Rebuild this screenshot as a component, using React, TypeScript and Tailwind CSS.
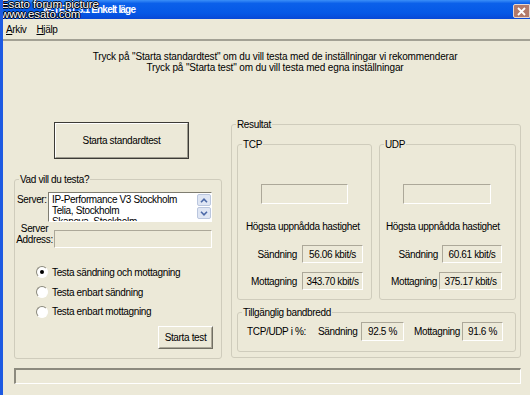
import React from "react";

const sunken =
  "border-t border-l border-t-[#aca899] border-l-[#aca899] border-b border-r border-b-white border-r-white";

function Group({
  label,
  className,
  children,
}: {
  label: string;
  className?: string;
  children?: React.ReactNode;
}) {
  return (
    <div className={"relative border border-[#cfccbc] rounded-[3px] flex flex-col " + (className ?? "")}>
      <span className="absolute -top-[6px] left-[4px] px-[1px] bg-[#ece9d8] leading-[11px] whitespace-nowrap">
        {label}
      </span>
      {children}
    </div>
  );
}

function Radio({ checked, label }: { checked?: boolean; label: string }) {
  return (
    <div className="flex items-center h-[20px] pl-[21px]">
      <div className="w-[12px] h-[12px] rounded-full bg-white border border-t-[#8a887c] border-l-[#8a887c] border-b-white border-r-white flex items-center justify-center">
        {checked && <div className="w-[4px] h-[4px] rounded-full bg-black" />}
      </div>
      <span className="ml-[4px] whitespace-nowrap">{label}</span>
    </div>
  );
}

function ValueBox({ value, className }: { value?: string; className?: string }) {
  return (
    <div className={sunken + " flex items-center justify-center whitespace-nowrap " + (className ?? "")}>
      {value}
    </div>
  );
}

export default function App() {
  return (
    <div className="w-[530px] h-[395px] overflow-hidden relative bg-[#ece9d8] border-l-[3px] border-[#1d5ae2] flex flex-col font-['Liberation_Sans',Arial,sans-serif] text-[10px] leading-[11px] tracking-[-0.35px] text-black">
      {/* Title bar */}
      <div className="h-[19px] shrink-0 bg-[linear-gradient(to_bottom,#3b8ff8_0%,#0b60ea_18%,#0558e6_70%,#0848d6_100%)] flex">
        <span className="pl-[40px] pt-[4px] text-white font-bold text-[10px] leading-[11px] tracking-[-0.8px] whitespace-nowrap">
          IP-TEST 3.1 Enkelt läge
        </span>
        <div className="ml-auto mt-[4px] w-[17px] h-[14px] bg-[#b27a6a] border border-[#e8d8d0] rounded-l-[2px] flex items-center justify-center">
          <svg width="9" height="9" viewBox="0 0 9 9">
            <path d="M1 1 L8 8 M8 1 L1 8" stroke="#ffffff" strokeWidth="1.8" fill="none" />
          </svg>
        </div>
      </div>

      {/* Watermark */}
      <div className="absolute left-[-2px] top-0 text-white text-[11.5px] leading-[9.5px] tracking-[-0.1px] [text-shadow:1px_0_0_#000,-1px_0_0_#000,0_1px_0_#000,0_-1px_0_#000]">
        <div>Esato forum picture</div>
        <div>www.esato.com</div>
      </div>

      {/* Menu */}
      <div className="h-[20px] shrink-0 flex items-center pl-[3px] gap-[10px]">
        <span>
          <span className="underline">A</span>rkiv
        </span>
        <span>
          <span className="underline">H</span>jälp
        </span>
      </div>
      <div className="h-[2px] shrink-0 bg-[#a3a194]" />

      {/* Instructions */}
      <div className="mt-[10px] pl-[17px] text-center tracking-[-0.15px]">
        <div>Tryck på "Starta standardtest" om du vill testa med de inställningar vi rekommenderar</div>
        <div>Tryck på "Starta test" om du vill testa med egna inställningar</div>
      </div>

      {/* Main row */}
      <div className="mt-[45px] flex items-start">
        {/* Left column */}
        <div className="ml-[11px] w-[208px] shrink-0 flex flex-col">
          <button className="ml-[40px] mt-[4px] w-[135px] h-[37px] border border-[#3c3b36] p-0 bg-[#ece9d8]">
            <div className="w-full h-full border border-t-white border-l-white border-b-[#9d9b8e] border-r-[#9d9b8e] flex items-center justify-center">
              Starta standardtest
            </div>
          </button>

          <Group label="Vad vill du testa?" className="mt-[20px] h-[180px] w-[208px]">
            <div className="mt-[12px] flex">
              <span className="ml-[2px] w-[31px] pt-[2px]">Server:</span>
              <div className="w-[164px] h-[30px] bg-white border border-t-[#7f7d71] border-l-[#7f7d71] border-b-white border-r-white overflow-hidden flex">
                <div className="flex-1 pl-[3px] pt-[1px] whitespace-nowrap overflow-hidden">
                  <div>IP-Performance V3 Stockholm</div>
                  <div>Telia, Stockholm</div>
                  <div>Skanova, Stockholm</div>
                </div>
                <div className="w-[14px] flex flex-col gap-[1px] pt-[1px]">
                  <div className="h-[12px] bg-[#dfe6f4] border border-[#bac6de] rounded-[2px] flex items-center justify-center">
                    <svg width="8" height="5" viewBox="0 0 8 5">
                      <path d="M1 4.2 L4 1.2 L7 4.2" stroke="#4d6aa8" strokeWidth="1.6" fill="none" />
                    </svg>
                  </div>
                  <div className="h-[12px] bg-[#dfe6f4] border border-[#bac6de] rounded-[2px] flex items-center justify-center">
                    <svg width="8" height="5" viewBox="0 0 8 5">
                      <path d="M1 0.8 L4 3.8 L7 0.8" stroke="#4d6aa8" strokeWidth="1.6" fill="none" />
                    </svg>
                  </div>
                </div>
              </div>
            </div>

            <div className="mt-[1px] flex items-start">
              <div className="w-[39px] text-center">
                <div>Server</div>
                <div>Address:</div>
              </div>
              <div className={sunken + " mt-[7px] w-[158px] h-[18px]"} />
            </div>

            <div className="mt-[14px] flex flex-col">
              <Radio checked label="Testa sändning och mottagning" />
              <Radio label="Testa enbart sändning" />
              <div className="h-[19px] flex items-center pl-[21px]">
                <div className="w-[12px] h-[12px] rounded-full bg-white border border-t-[#8a887c] border-l-[#8a887c] border-b-white border-r-white" />
                <span className="ml-[4px] whitespace-nowrap">Testa enbart mottagning</span>
              </div>
            </div>

            <button className="mt-[5px] self-end mr-[8px] w-[55px] h-[23px] p-0 bg-[#ece9d8] border border-t-white border-l-white border-b-[#716f64] border-r-[#716f64]">
              <div className="w-full h-full border border-t-[#ece9d8] border-l-[#ece9d8] border-b-[#aca899] border-r-[#aca899] flex items-center justify-center">
                Starta test
              </div>
            </button>
          </Group>
        </div>

        {/* Right column */}
        <div className="ml-[9px] w-[290px] shrink-0 flex flex-col">
          <Group label="Resultat" className="mt-[6px] h-[234px] w-[290px]">
            <div className="mt-[19px] ml-[5px] flex gap-[7px]">
              <Group label="TCP" className="w-[135px] h-[156px]">
                <ValueBox className="mt-[39px] ml-[23px] w-[87px] h-[20px]" />
                <div className="mt-[17px] ml-[8px] whitespace-nowrap">Högsta uppnådda hastighet</div>
                <div className="mt-[13px] flex justify-end items-center pr-[8px] gap-[5px]">
                  <span>Sändning</span>
                  <ValueBox value="56.06 kbit/s" className="w-[61px] h-[18px]" />
                </div>
                <div className="mt-[9px] flex justify-end items-center pr-[8px] gap-[5px]">
                  <span>Mottagning</span>
                  <ValueBox value="343.70 kbit/s" className="w-[61px] h-[18px]" />
                </div>
              </Group>
              <Group label="UDP" className="w-[137px] h-[156px]">
                <ValueBox className="mt-[39px] ml-[23px] w-[88px] h-[20px]" />
                <div className="mt-[17px] ml-[6px] whitespace-nowrap">Högsta uppnådda hastighet</div>
                <div className="mt-[13px] flex justify-end items-center pr-[13px] gap-[4px]">
                  <span>Sändning</span>
                  <ValueBox value="60.61 kbit/s" className="w-[60px] h-[18px]" />
                </div>
                <div className="mt-[9px] flex justify-end items-center pr-[13px] gap-[2px]">
                  <span>Mottagning</span>
                  <ValueBox value="375.17 kbit/s" className="w-[63px] h-[18px]" />
                </div>
              </Group>
            </div>

            <Group label="Tillgänglig bandbredd" className="mt-[12px] ml-[5px] w-[279px] h-[40px]">
              <div className="mt-[9px] h-[19px] flex items-center pl-[9px] whitespace-nowrap">
                <span className="w-[71px]">TCP/UDP i %:</span>
                <span className="w-[43px]">Sändning</span>
                <ValueBox value="92.5 %" className="w-[43px] h-[19px]" />
                <span className="ml-[10px] w-[48px]">Mottagning</span>
                <ValueBox value="91.6 %" className="w-[41px] h-[19px]" />
              </div>
            </Group>
          </Group>
        </div>
      </div>

      {/* Status bar */}
      <div className="mt-[9px] ml-[11px] w-[507px] h-[16px] shrink-0 border-t-2 border-l-2 border-t-[#8c8a7e] border-l-[#8c8a7e] border-b border-r border-b-white border-r-white" />
    </div>
  );
}
